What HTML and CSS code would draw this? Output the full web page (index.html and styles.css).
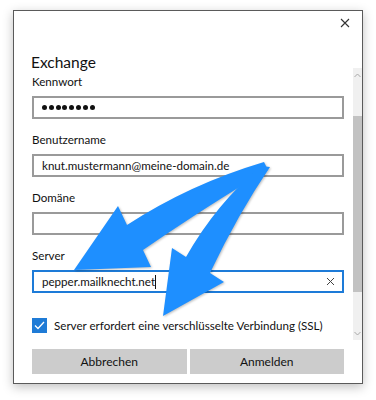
FILE: index.html
```html
<!DOCTYPE html>
<html lang="de">
<head>
    <meta charset="UTF-8">
    <meta name="viewport" content="width=device-width, initial-scale=1.0">
    <title>Exchange</title>
    <link rel="stylesheet" href="styles.css">
</head>
<body>
    <div class="dialog">
        <div class="head">
            <div class="close">
                <svg width="10" height="10" viewBox="0 0 10 10"><path d="M1 1L9 9M9 1L1 9" stroke="#333" stroke-width="1.1"/></svg>
            </div>
            <div class="title">Exchange</div>
        </div>
        <div class="body">
            <div class="form">
                <div class="field">
                    <div class="label">Kennwort</div>
                    <div class="input">
                        <span class="dot"></span><span class="dot"></span><span class="dot"></span><span class="dot"></span>
                        <span class="dot"></span><span class="dot"></span><span class="dot"></span><span class="dot"></span>
                    </div>
                </div>
                <div class="field">
                    <div class="label">Benutzername</div>
                    <div class="input">knut.mustermann@meine-domain.de</div>
                </div>
                <div class="field">
                    <div class="label">Domäne</div>
                    <div class="input"></div>
                </div>
                <div class="field">
                    <div class="label">Server</div>
                    <div class="input focus">
                        <span class="value">pepper.mailknecht.net</span><span class="caret"></span>
                        <span class="clear">
                            <svg width="9" height="9" viewBox="0 0 9 9"><path d="M1 1L8 8M8 1L1 8" stroke="#444" stroke-width="1"/></svg>
                        </span>
                    </div>
                </div>
                <div class="check">
                    <span class="box">
                        <svg width="15" height="15" viewBox="0 0 15 15"><path d="M3 7.5L6 10.5L12 4" fill="none" stroke="#fff" stroke-width="1.3"/></svg>
                    </span>
                    <span>Server erfordert eine verschlüsselte Verbindung (SSL)</span>
                </div>
            </div>
            <div class="scrollbar">
                <div class="arrow">
                    <svg width="7" height="5" viewBox="0 0 7 5"><path d="M0.5 4L3.5 1L6.5 4" fill="none" stroke="#a8a8a8" stroke-width="1"/></svg>
                </div>
                <div class="track">
                    <div class="thumb"></div>
                </div>
                <div class="arrow">
                    <svg width="7" height="5" viewBox="0 0 7 5"><path d="M0.5 1L3.5 4L6.5 1" fill="none" stroke="#a8a8a8" stroke-width="1"/></svg>
                </div>
            </div>
        </div>
        <div class="buttons">
            <div class="btn">Abbrechen</div>
            <div class="btn">Anmelden</div>
        </div>
    </div>

    <!-- Pfeile der Anleitung -->
    <svg class="arrows" width="376" height="400" viewBox="0 0 376 400">
        <path d="M264 162 Q190 184 127 225 L118 206 L74 270 L151 267 L143 250 Q210 204 268 170 Z" fill="#1e8fff"/>
        <path d="M261 166 Q216 204 186 257 L172 248 L163 316 L224 282 L210 273 Q238 214 270 167 Z" fill="#1e8fff"/>
    </svg>
</body>
</html>
```

FILE: styles.css
```css
* {
    margin: 0;
    padding: 0;
    box-sizing: border-box;
}
body {
    background: #fff;
    font-family: Lato, "Noto Sans", sans-serif;
    font-size: 11.6px;
    color: #111;
    width: 376px;
    height: 400px;
    overflow: hidden;
}
.dialog {
    width: 350px;
    height: 374px;
    margin: 10px 0 0 13px;
    border: 1px solid #5a5a5a;
    background: #fff;
    box-shadow: 0 3px 10px rgba(0, 0, 0, .25);
    display: flex;
    flex-direction: column;
}
.head {
    height: 57px;
    padding-left: 17px;
}
.close {
    display: flex;
    justify-content: flex-end;
    padding: 7px 12px 0 0;
    height: 26px;
}
.title {
    font-size: 15.5px;
    line-height: 20px;
    color: #111;
    margin-top: 15px;
}
.body {
    height: 272px;
    display: flex;
}
.form {
    width: 339px;
    padding: 6px 0 0 18px;
}
.field {
    margin-bottom: 13px;
}
.label {
    line-height: 16px;
    margin-bottom: 6px;
}
.input {
    width: 312px;
    height: 23px;
    border: 2px solid #9a9a9a;
    padding-left: 8px;
    display: flex;
    align-items: center;
    line-height: 16px;
}
.input.focus {
    border-color: #1d7bd8;
}
.dot {
    width: 5px;
    height: 5px;
    border-radius: 50%;
    background: #111;
    margin-right: 1.8px;
}
.caret {
    width: 1px;
    height: 14px;
    background: #111;
}
.clear {
    margin-left: auto;
    margin-right: 7px;
    display: flex;
}
.check {
    display: flex;
    align-items: center;
    gap: 7px;
    margin-top: 25px;
    font-size: 11.6px;
}
.box {
    width: 15px;
    height: 15px;
    background: #1f7bd6;
    display: flex;
}
.scrollbar {
    width: 9px;
    background: #f0f0f0;
    display: flex;
    flex-direction: column;
}
.arrow {
    height: 14px;
    display: flex;
    align-items: center;
    justify-content: center;
}
.track {
    flex: 1;
    padding-top: 34px;
    padding-bottom: 34px;
}
.thumb {
    height: 100%;
    background: #c2c2c2;
}
.buttons {
    display: flex;
    gap: 3px;
    padding: 9px 0 0 18px;
}
.btn {
    height: 25px;
    width: 154.5px;
    background: #cccccc;
    display: flex;
    align-items: center;
    justify-content: center;
    font-size: 12px;
}
.arrows {
    position: absolute;
    left: 0;
    top: 0;
    pointer-events: none;
    filter: drop-shadow(1px 1px 1px rgba(0, 0, 0, .25));
}
```
